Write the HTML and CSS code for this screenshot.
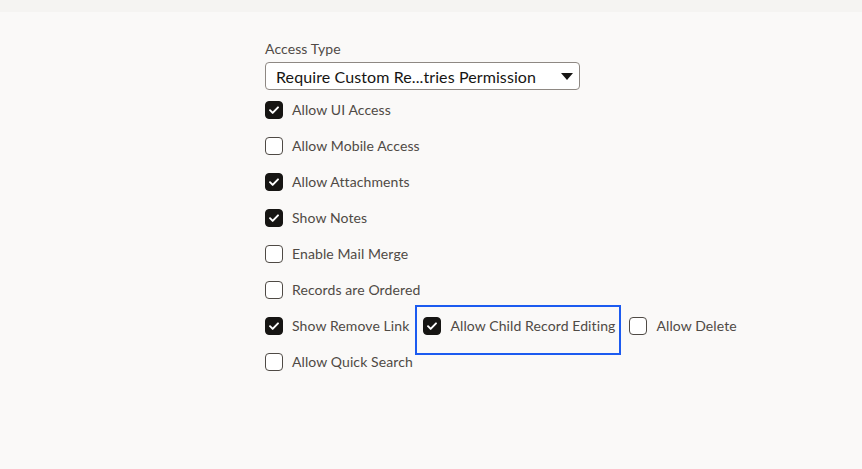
FILE: index.html
```html
<!DOCTYPE html>
<html>
<head>
<meta charset="utf-8">
<link rel="stylesheet" href="styles.css">
</head>
<body>
<div class="topbar"></div>
<div class="form">
  <div class="field-label">Access Type</div>
  <div class="select">
    <span class="select-text">Require Custom Re...tries Permission</span>
    <svg class="caret" width="12" height="7" viewBox="0 0 12 7"><path d="M0 0H12L6 7Z" fill="#161513"/></svg>
  </div>
  <div class="rows">
    <div class="row"><label class="cb"><span class="box on"><svg viewBox="0 0 18 18"><path d="M4.5 9.2l3 3 6-6.2" fill="none" stroke="#fff" stroke-width="2.2" stroke-linecap="round" stroke-linejoin="round"/></svg></span><span class="txt">Allow UI Access</span></label></div>
    <div class="row"><label class="cb"><span class="box"></span><span class="txt">Allow Mobile Access</span></label></div>
    <div class="row"><label class="cb"><span class="box on"><svg viewBox="0 0 18 18"><path d="M4.5 9.2l3 3 6-6.2" fill="none" stroke="#fff" stroke-width="2.2" stroke-linecap="round" stroke-linejoin="round"/></svg></span><span class="txt">Allow Attachments</span></label></div>
    <div class="row"><label class="cb"><span class="box on"><svg viewBox="0 0 18 18"><path d="M4.5 9.2l3 3 6-6.2" fill="none" stroke="#fff" stroke-width="2.2" stroke-linecap="round" stroke-linejoin="round"/></svg></span><span class="txt">Show Notes</span></label></div>
    <div class="row"><label class="cb"><span class="box"></span><span class="txt">Enable Mail Merge</span></label></div>
    <div class="row"><label class="cb"><span class="box"></span><span class="txt">Records are Ordered</span></label></div>
    <div class="row">
      <label class="cb"><span class="box on"><svg viewBox="0 0 18 18"><path d="M4.5 9.2l3 3 6-6.2" fill="none" stroke="#fff" stroke-width="2.2" stroke-linecap="round" stroke-linejoin="round"/></svg></span><span class="txt">Show Remove Link</span></label>
      <label class="cb focused"><span class="box on"><svg viewBox="0 0 18 18"><path d="M4.5 9.2l3 3 6-6.2" fill="none" stroke="#fff" stroke-width="2.2" stroke-linecap="round" stroke-linejoin="round"/></svg></span><span class="txt">Allow Child Record Editing</span></label>
      <label class="cb"><span class="box"></span><span class="txt">Allow Delete</span></label>
    </div>
    <div class="row"><label class="cb"><span class="box"></span><span class="txt">Allow Quick Search</span></label></div>
  </div>
</div>
</body>
</html>
```
FILE: styles.css
```css
html, body {
  margin: 0;
  padding: 0;
}
body {
  background: #faf9f8;
  font-family: "Lato", "Noto Sans", sans-serif;
  color: #4f4a45;
  width: 862px;
  height: 469px;
  overflow: hidden;
}
.topbar {
  height: 12px;
  background: #f5f4f2;
}
.form {
  margin-left: 265px;
  padding-top: 28px;
}
.field-label {
  font-size: 14px;
  line-height: 18px;
  color: #504b47;
  margin-bottom: 4px;
  letter-spacing: 0.1px;
}
.select {
  width: 315px;
  height: 28px;
  box-sizing: border-box;
  border: 1px solid #8e8883;
  border-radius: 4px;
  background: #fff;
  display: flex;
  align-items: center;
  justify-content: space-between;
  padding: 0 6px 0 10px;
}
.select-text {
  font-size: 16px;
  color: #161513;
  letter-spacing: 0.1px;
}
.caret {
  display: block;
}
.rows {
  padding-top: 2px;
}
.row {
  height: 36px;
  display: flex;
  align-items: center;
}
.cb {
  display: flex;
  align-items: center;
  margin-right: 14px;
  position: relative;
}
.box {
  width: 18px;
  height: 18px;
  box-sizing: border-box;
  border: 1px solid #4f4a45;
  border-radius: 4px;
  background: #fff;
  display: block;
}
.box.on {
  background: #161513;
  border-color: #161513;
}
.box svg {
  display: block;
  width: 16px;
  height: 16px;
}
.txt {
  font-size: 14px;
  margin-left: 9px;
  line-height: 18px;
  letter-spacing: 0.1px;
}
.focused::after {
  content: "";
  position: absolute;
  left: -8px;
  top: -12px;
  right: -6px;
  height: 50px;
  border: 2px solid #1c5bf0;
  box-sizing: border-box;
}
```
